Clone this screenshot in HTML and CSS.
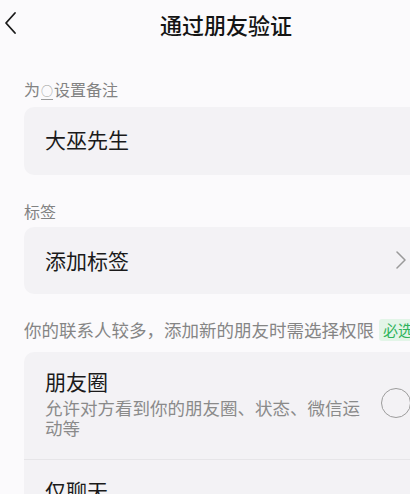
FILE: index.html
```html
<!DOCTYPE html>
<html lang="zh-CN">
<head>
<meta charset="utf-8">
<title>通过朋友验证</title>
<link rel="stylesheet" href="styles.css">
</head>
<body>
<div class="page">
  <header class="topbar">
    <span class="back" aria-label="返回">
      <svg width="14" height="24" viewBox="0 0 14 24"><polyline points="11,2 2,12 11,22" fill="none" stroke="#1a1a1a" stroke-width="1.8" stroke-linecap="round" stroke-linejoin="round"/></svg>
    </span>
    <h1 class="title">通过朋友验证</h1>
  </header>

  <div class="label first">为<span class="name">○</span>设置备注</div>
  <div class="card field"><span class="field-text">大巫先生</span></div>

  <div class="label second">标签</div>
  <div class="card field field-link">
    <span class="field-text">添加标签</span>
    <svg class="chev" width="12" height="20" viewBox="0 0 12 20"><polyline points="2,2 10,10 2,18" fill="none" stroke="#9a9a9a" stroke-width="1.5" stroke-linecap="round" stroke-linejoin="round"/></svg>
  </div>

  <div class="notice">
    <span class="notice-text">你的联系人较多，添加新的朋友时需选择权限</span>
    <span class="badge">必选</span>
  </div>

  <div class="card options">
    <div class="option">
      <div class="option-body">
        <div class="option-title">朋友圈</div>
        <div class="option-desc">允许对方看到你的朋友圈、状态、微信运动等</div>
      </div>
      <span class="radio"></span>
    </div>
    <div class="option">
      <div class="option-body">
        <div class="option-title">仅聊天</div>
      </div>
    </div>
  </div>
</div>
</body>
</html>
```

FILE: styles.css
```css
html, body {
  margin: 0;
  padding: 0;
  overflow: hidden;
  background: #fbfafc;
}
body {
  font-family: "Noto Sans CJK SC", "Noto Sans", sans-serif;
  color: #1a1a1a;
}
.page {
  width: 452px;
  box-sizing: border-box;
  padding: 0 24px;
}
.topbar {
  position: relative;
  height: 48px;
  display: flex;
  align-items: center;
  justify-content: center;
}
.back {
  position: absolute;
  left: -20px;
  top: 11px;
  display: flex;
}
.title {
  margin: 0;
  font-size: 22px;
  font-weight: 500;
  line-height: 46px;
  color: #141414;
}
.label {
  font-size: 16px;
  line-height: 22px;
  color: #828282;
  margin-bottom: 5px;
}
.label.first { margin-top: 30px; }
.label.second { margin-top: 25px; }
.name {
  font-size: 12px;
  text-decoration: underline;
  text-underline-offset: 3px;
  color: #9a9a9a;
  padding: 0 1px;
}
.card {
  background: #f3f2f5;
  border-radius: 10px;
}
.field {
  height: 68px;
  box-sizing: border-box;
  display: flex;
  align-items: center;
  padding: 0 21px 4px;
}
.field-link {
  height: 67px;
  justify-content: space-between;
  padding-bottom: 2px;
}
.field-text {
  font-size: 21px;
  line-height: 28px;
}
.notice {
  display: flex;
  align-items: center;
  gap: 5px;
  margin-top: 24px;
  margin-bottom: 10px;
  white-space: nowrap;
  height: 24px;
}
.notice-text {
  font-size: 17.5px;
  line-height: 24px;
  color: #858585;
}
.badge {
  background: #e3f5e8;
  color: #2fb35c;
  font-size: 15px;
  line-height: 22px;
  padding: 0 4px;
  border-radius: 3px;
}
.options {
  overflow: hidden;
}
.option {
  display: flex;
  align-items: center;
  gap: 16px;
  padding: 15px 17px 21px 21px;
}
.option + .option {
  border-top: 1px solid #e6e5e8;
  padding-top: 16px;
}
.option-body {
  flex: 1;
  min-width: 0;
}
.option-title {
  font-size: 21px;
  line-height: 28px;
}
.option-desc {
  font-size: 17.5px;
  line-height: 20px;
  color: #8a8a8a;
  margin-top: 3px;
}
.radio {
  width: 28px;
  height: 28px;
  border: 1.5px solid #9c9c9c;
  border-radius: 50%;
  flex: none;
}
```
